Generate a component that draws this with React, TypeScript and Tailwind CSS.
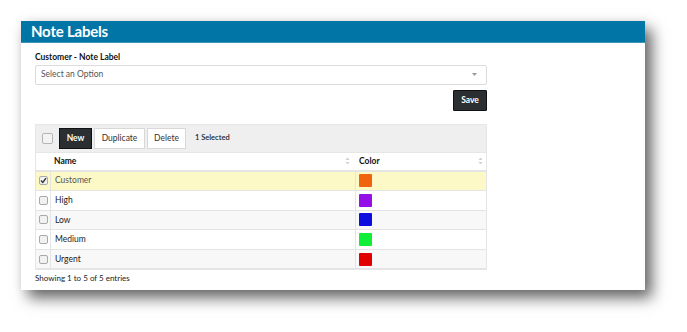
import React from 'react';

interface NoteLabel {
  name: string;
  color: string;
  checked: boolean;
}

const labels: NoteLabel[] = [
  { name: 'Customer', color: '#f0640f', checked: true },
  { name: 'High', color: '#9510e6', checked: false },
  { name: 'Low', color: '#0d0ddf', checked: false },
  { name: 'Medium', color: '#10ee37', checked: false },
  { name: 'Urgent', color: '#e00000', checked: false },
];

const SortIcon = () => (
  <svg width="5" height="8" viewBox="0 0 5 8" className="text-[#d0d0d0]">
    <path d="M2.5 0.5 L4.5 3 L0.5 3 Z" fill="currentColor" />
    <path d="M2.5 7.5 L4.5 5 L0.5 5 Z" fill="currentColor" />
  </svg>
);

const Box = ({ checked }: { checked: boolean }) => (
  <div className="w-[9px] h-[9px] rounded-[2px] border border-[#a9a9a9] bg-[#f1f1f1] flex items-center justify-center">
    {checked && (
      <svg width="7" height="7" viewBox="0 0 7 7">
        <path d="M1 3.6 L2.8 5.4 L6 1.2" stroke="#333" strokeWidth="1.4" fill="none" />
      </svg>
    )}
  </div>
);

const App: React.FC = () => {
  return (
    <div className="w-[687px] h-[332px] bg-white pt-[21px] pl-[21px] font-['Lato',sans-serif]">
      <div className="w-[624px] h-[269px] bg-white shadow-[7px_8px_14px_rgba(0,0,0,0.6),0_0_10px_rgba(0,0,0,0.06)]">
        {/* Header */}
        <div className="h-[22px] bg-[#0176a6] border-b border-[#3a93b9] pl-[10px] flex items-center">
          <span className="text-white text-[15px] font-bold leading-none tracking-[-0.2px]">Note Labels</span>
        </div>

        <div className="pl-[14px] w-[466px]">
          <div className="pt-[10px] text-[8.5px] font-bold text-[#111] leading-none">Customer - Note Label</div>
          <div className="mt-[3px] h-[20px] border border-[#dcdcdc] rounded-[2px] flex items-center justify-between pl-[5px] pr-[9px]">
            <span className="text-[8.5px] text-[#555]">Select an Option</span>
            <svg width="5" height="3" viewBox="0 0 5 3">
              <path d="M0 0 L5 0 L2.5 3 Z" fill="#999" />
            </svg>
          </div>
          <div className="flex justify-end mt-[5px]">
            <button className="h-[21px] w-[34px] bg-[#2b2f32] border border-[#111] text-white text-[8.5px] font-bold rounded-[1px]">
              Save
            </button>
          </div>

          {/* Table */}
          <div className="mt-[13px] border border-[#e6e6e6]">
            <div className="h-[27px] bg-[#efefef] flex items-center pl-[6px]">
              <div className="w-[11px] h-[11px] rounded-[2px] border border-[#b5b5b5] bg-[#f3f3f3]" />
              <button className="ml-[6px] h-[21px] w-[33px] bg-[#2b2f32] border border-[#111] text-white text-[8.5px] font-bold">
                New
              </button>
              <button className="ml-[2px] h-[21px] w-[51px] bg-white border border-[#d8d8d8] text-[#333] text-[8.5px]">
                Duplicate
              </button>
              <button className="ml-[2px] h-[21px] w-[39px] bg-white border border-[#d8d8d8] text-[#333] text-[8.5px]">
                Delete
              </button>
              <span className="ml-[9px] text-[7.5px] text-[#222] font-semibold">1 Selected</span>
            </div>
            <div className="h-[20px] flex bg-white border-t border-[#e6e6e6] border-b-2 border-b-[#e4e4e4]">
              <div className="w-[15px]" />
              <div className="w-[305px] flex items-center justify-between pl-[3px] pr-[6px]">
                <span className="text-[8.5px] font-bold text-[#111]">Name</span>
                <SortIcon />
              </div>
              <div className="flex-1 flex items-center justify-between pl-[3px] pr-[3px]">
                <span className="text-[8.5px] font-bold text-[#111]">Color</span>
                <SortIcon />
              </div>
            </div>
            {labels.map((l, i) => (
              <div
                key={l.name}
                className={`h-[19.6px] flex border-b border-[#e4e4e4] ${
                  l.checked ? 'bg-[#fdf9c7]' : i % 2 === 0 ? 'bg-[#f8f8f8]' : 'bg-white'
                }`}
              >
                <div className="w-[15px] flex items-center justify-center border-r border-[#e4e4e4]">
                  <Box checked={l.checked} />
                </div>
                <div className="w-[305px] flex items-center pl-[4px] border-r border-[#e4e4e4]">
                  <span className={`text-[8.5px] ${l.checked ? 'text-[#555]' : 'text-[#222]'}`}>{l.name}</span>
                </div>
                <div className="flex-1 flex items-center pl-[3px]">
                  <div className="w-[13px] h-[13px] rounded-[1px]" style={{ backgroundColor: l.color }} />
                </div>
              </div>
            ))}
          </div>
          <div className="mt-[2px] text-[8px] text-[#222]">Showing 1 to 5 of 5 entries</div>
        </div>
      </div>
    </div>
  );
};

export default App;
